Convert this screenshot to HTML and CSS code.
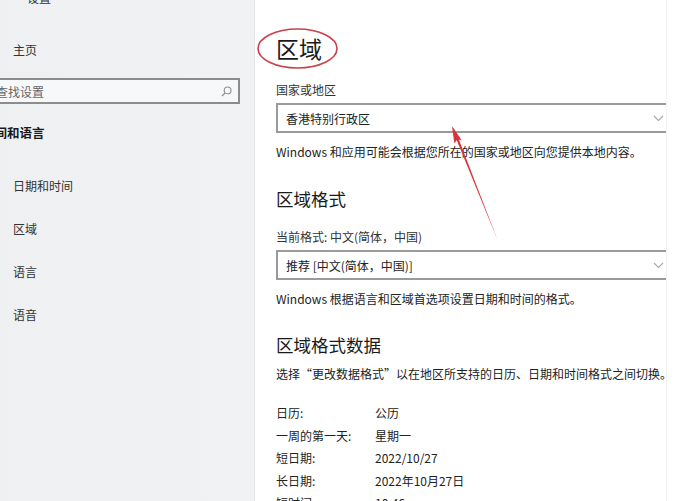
FILE: index.html
```html
<!DOCTYPE html>
<html lang="zh-CN">
<head>
  <meta charset="UTF-8" />
  <title>设置 - 区域</title>
  <meta name="viewport" content="width=device-width, initial-scale=1.0" />
  <link rel="stylesheet" href="styles.css">
</head>
<body>

<div class="window">

  <!-- Sidebar -->
  <aside class="sidebar">
    <div class="side-title">设置</div>
    <div class="side-home">主页</div>
    <div class="search">
      <span>查找设置</span>
      <svg width="11" height="11" viewBox="0 0 11 11"><circle cx="6.6" cy="4.4" r="3.4" fill="none" stroke="#8a8a8a" stroke-width="1.1"/><line x1="4.2" y1="6.8" x2="1" y2="10" stroke="#8a8a8a" stroke-width="1.2"/></svg>
    </div>
    <div class="side-group">时间和语言</div>
    <ul class="side-nav">
      <li>日期和时间</li>
      <li>区域</li>
      <li>语言</li>
      <li>语音</li>
    </ul>
  </aside>

  <!-- Region page -->
  <main class="content">
    <h1>区域</h1>

    <div class="label">国家或地区</div>
    <div class="select">
      <span>香港特别行政区</span>
      <svg width="11" height="7" viewBox="0 0 11 7"><polyline points="1,1 5.5,5.5 10,1" fill="none" stroke="#a8a8a8" stroke-width="1.1"/></svg>
    </div>
    <p class="desc">Windows 和应用可能会根据您所在的国家或地区向您提供本地内容。</p>

    <h2>区域格式</h2>
    <div class="label label-sub">当前格式: 中文(简体，中国)</div>
    <div class="select">
      <span>推荐 [中文(简体，中国)]</span>
      <svg width="11" height="7" viewBox="0 0 11 7"><polyline points="1,1 5.5,5.5 10,1" fill="none" stroke="#a8a8a8" stroke-width="1.1"/></svg>
    </div>
    <p class="desc">Windows 根据语言和区域首选项设置日期和时间的格式。</p>

    <h2 class="h2-data">区域格式数据</h2>
    <p class="desc desc-tight">选择“更改数据格式”以在地区所支持的日历、日期和时间格式之间切换。</p>

    <dl class="data">
      <dt>日历:</dt><dd>公历</dd>
      <dt>一周的第一天:</dt><dd>星期一</dd>
      <dt>短日期:</dt><dd>2022/10/27</dd>
      <dt>长日期:</dt><dd>2022年10月27日</dd>
      <dt>短时间:</dt><dd>10:46</dd>
    </dl>
  </main>

  <div class="edge"></div>

  <!-- Hand-drawn annotations -->
  <svg class="marks" width="685" height="501" viewBox="0 0 685 501">
    <ellipse cx="297.5" cy="48.5" rx="39.5" ry="19.5" fill="none" stroke="#c9404a" stroke-width="1.6"/>
    <polygon points="498,241 455.4,137 457.6,136.3" fill="#d8343b"/>
    <polygon points="452,126 461.7,140.3 457.6,139.2 454.3,143.3" fill="#d8343b"/>
  </svg>

</div>

</body>
</html>
```

FILE: styles.css
```css
:root {
  --side-bg: #eff0f2;
  --text: #222222;
  --muted: #333333;
  --border: #9a9a9a;
  --white: #ffffff;
}

* {
  box-sizing: border-box;
}

body {
  margin: 0;
  font-family: "Noto Sans CJK SC", "Noto Sans", sans-serif;
  font-size: 12px;
  color: var(--text);
  background: var(--white);
  overflow: hidden;
}

.window {
  position: relative;
  display: flex;
  width: 685px;
  height: 501px;
  overflow: hidden;
}

/* Sidebar */
.sidebar {
  width: 255px;
  flex: none;
  padding-left: 13px;
  background: linear-gradient(90deg, #eef0f2, #f1f2f4);
  border-right: 1px solid #e5e6e8;
  color: var(--muted);
}

.side-title {
  margin-top: -12px;
  height: 20px;
  line-height: 20px;
  padding-left: 14px;
}

.side-home {
  margin-top: 32px;
  line-height: 20px;
}

.search {
  margin: 18px 0 0 -25px;
  width: 252px;
  height: 26px;
  border: 2px solid #8c8c8c;
  background: #f7f8f9;
  display: flex;
  align-items: center;
  justify-content: space-between;
  padding: 0 6px;
  color: #666;
}

.side-group {
  margin: 19px 0 0 -31px;
  line-height: 20px;
  font-weight: 700;
  font-size: 12.5px;
  color: #1a1a1a;
}

.side-nav {
  list-style: none;
  margin: 21px 0 0;
  padding: 0;
}

.side-nav li {
  height: 43px;
  line-height: 43px;
}

/* Content */
.content {
  width: 411px;
  flex: none;
  padding-left: 21px;
  overflow: hidden;
}

h1 {
  margin: 28px 0 0;
  font-size: 23px;
  line-height: 40px;
  font-weight: 400;
  color: #1a1a1a;
}

h2 {
  margin: 25px 0 0;
  font-size: 17.5px;
  line-height: 26px;
  font-weight: 400;
  color: #1a1a1a;
}

.h2-data {
  margin-top: 24px;
}

.label {
  margin-top: 13px;
  line-height: 18px;
  color: var(--muted);
}

.label-sub {
  margin-top: 16px;
}

.select {
  margin-top: 4px;
  width: 400px;
  height: 30px;
  border: 2px solid var(--border);
  display: flex;
  align-items: center;
  justify-content: space-between;
  padding: 0 10px 0 8px;
  color: var(--text);
}

.desc {
  margin: 10px 0 0;
  line-height: 18px;
  white-space: nowrap;
}

.desc-tight {
  margin-top: 7px;
}

.data {
  display: grid;
  grid-template-columns: 99px 1fr;
  margin: 19px 0 0;
  line-height: 22.5px;
}

.data dt,
.data dd {
  margin: 0;
}

.edge {
  flex: 1;
  background: var(--white);
  border-left: 1px solid #f1f1f1;
}

.marks {
  position: absolute;
  top: 0;
  left: 0;
  pointer-events: none;
}
```
